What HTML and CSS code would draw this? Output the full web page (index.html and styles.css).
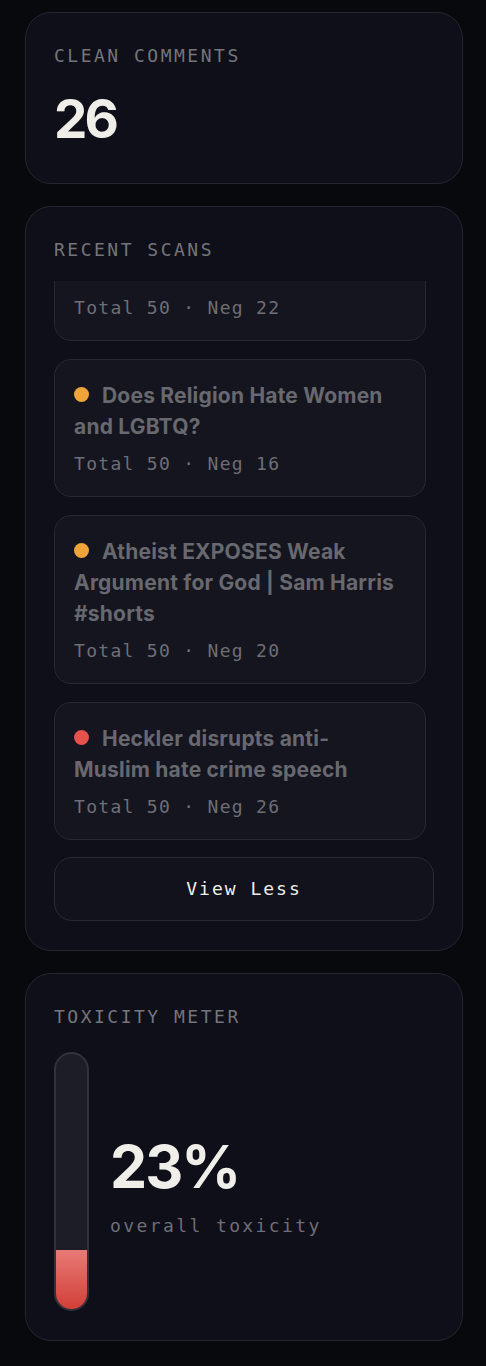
FILE: index.html
```html
<!doctype html>
<html>
<head>
<meta charset="utf-8">
<title>Scan Dashboard</title>
<link rel="stylesheet" href="styles.css">
</head>

<body>
<div class="wrap">
    <div class="card stat">
        <p class="label">CLEAN COMMENTS</p>
        <p class="big">26</p>
    </div>

    <div class="card scans-card">
        <p class="label">RECENT SCANS</p>
        <div class="scans" id="scans">
            <div class="scan">
                <p class="title"><span class="dot warn"></span>Why Do People Still Believe in Miracles?</p>
                <p class="meta">Total 50 · Neg 22</p>
            </div>
            <div class="scan">
                <p class="title"><span class="dot warn"></span>Does Religion Hate Women and LGBTQ?</p>
                <p class="meta">Total 50 · Neg 16</p>
            </div>
            <div class="scan">
                <p class="title"><span class="dot warn"></span>Atheist EXPOSES Weak Argument for God | Sam Harris #shorts</p>
                <p class="meta">Total 50 · Neg 20</p>
            </div>
            <div class="scan">
                <p class="title"><span class="dot bad"></span>Heckler disrupts anti-Muslim hate crime speech</p>
                <p class="meta">Total 50 · Neg 26</p>
            </div>
        </div>
        <a class="more" href="javascript:;">View Less</a>
    </div>

    <div class="card meter-card">
        <p class="label">TOXICITY METER</p>
        <div class="meter">
            <div class="tube"><div class="fill" style="height:23%"></div></div>
            <div class="reading">
                <p class="pct">23%</p>
                <p class="sub">overall toxicity</p>
            </div>
        </div>
    </div>
</div>
<script>
    var oScans = document.getElementById('scans');
    oScans.scrollTop = oScans.scrollHeight;
</script>
</body>
</html>
```

FILE: styles.css
```css
* { padding: 0; margin: 0; box-sizing: border-box; }
body { background: #08090d; font-family: Inter, "Noto Sans", sans-serif; color: #f0eee9; }
a { text-decoration: none; color: inherit; }

.wrap { padding: 12px 23px 25px 25px; display: flex; flex-direction: column; gap: 22px; }
.card { background: #0e0f18; border: 1px solid #25262f; border-radius: 26px; padding: 28px 28px 28px; }
.card .label { font: 18px/30px "DejaVu Sans Mono", monospace; letter-spacing: 2.5px; color: #75757c; }

.stat { padding-bottom: 34px; }
.stat .big { margin-top: 18px; font: 700 53px/60px Inter, sans-serif; letter-spacing: -3px; color: #f0eee9; }

.scans-card { padding-bottom: 29px; }
.scans { margin-top: 16px; height: 559px; overflow-y: auto; scrollbar-width: none; padding-right: 8px; display: flex; flex-direction: column; gap: 18px; }
.scan { flex-shrink: 0; background: #14151e; border: 1px solid #272833; border-radius: 17px; padding: 20px 26px 19px 19px; }
.scan .title { font: 700 21px/31px Inter, sans-serif; letter-spacing: 0.2px; color: #68686f; }
.scan .dot { display: inline-block; width: 15px; height: 15px; border-radius: 50%; margin-right: 13px; vertical-align: 1px; }
.scan .warn { background: #efa43b; }
.scan .bad { background: #e5514b; }
.scan .meta { margin-top: 9px; font: 18px/26px "DejaVu Sans Mono", monospace; letter-spacing: 1.3px; color: #6e6e76; }

.more { display: block; margin-top: 17px; height: 64px; border: 1px solid #292a35; border-radius: 18px; background: #11121b; text-align: center; font: 18px/62px "DejaVu Sans Mono", monospace; letter-spacing: 2px; color: #f0eee9; }

.meter-card { padding-bottom: 29px; }
.meter { margin-top: 20px; display: flex; align-items: center; gap: 21px; }
.tube { width: 35px; height: 259px; border: 2px solid #31323c; border-radius: 18px; background: #1c1d27; overflow: hidden; display: flex; flex-direction: column; justify-content: flex-end; }
.fill { background: linear-gradient(#e87a76, #d23f38); }
.reading { padding-top: 12px; }
.reading .pct { font: 700 59px/60px Inter, sans-serif; letter-spacing: -2px; color: #f0eee9; }
.reading .sub { margin-top: 16px; font: 18px/26px "DejaVu Sans Mono", monospace; letter-spacing: 2.4px; color: #6e6e76; }
```
